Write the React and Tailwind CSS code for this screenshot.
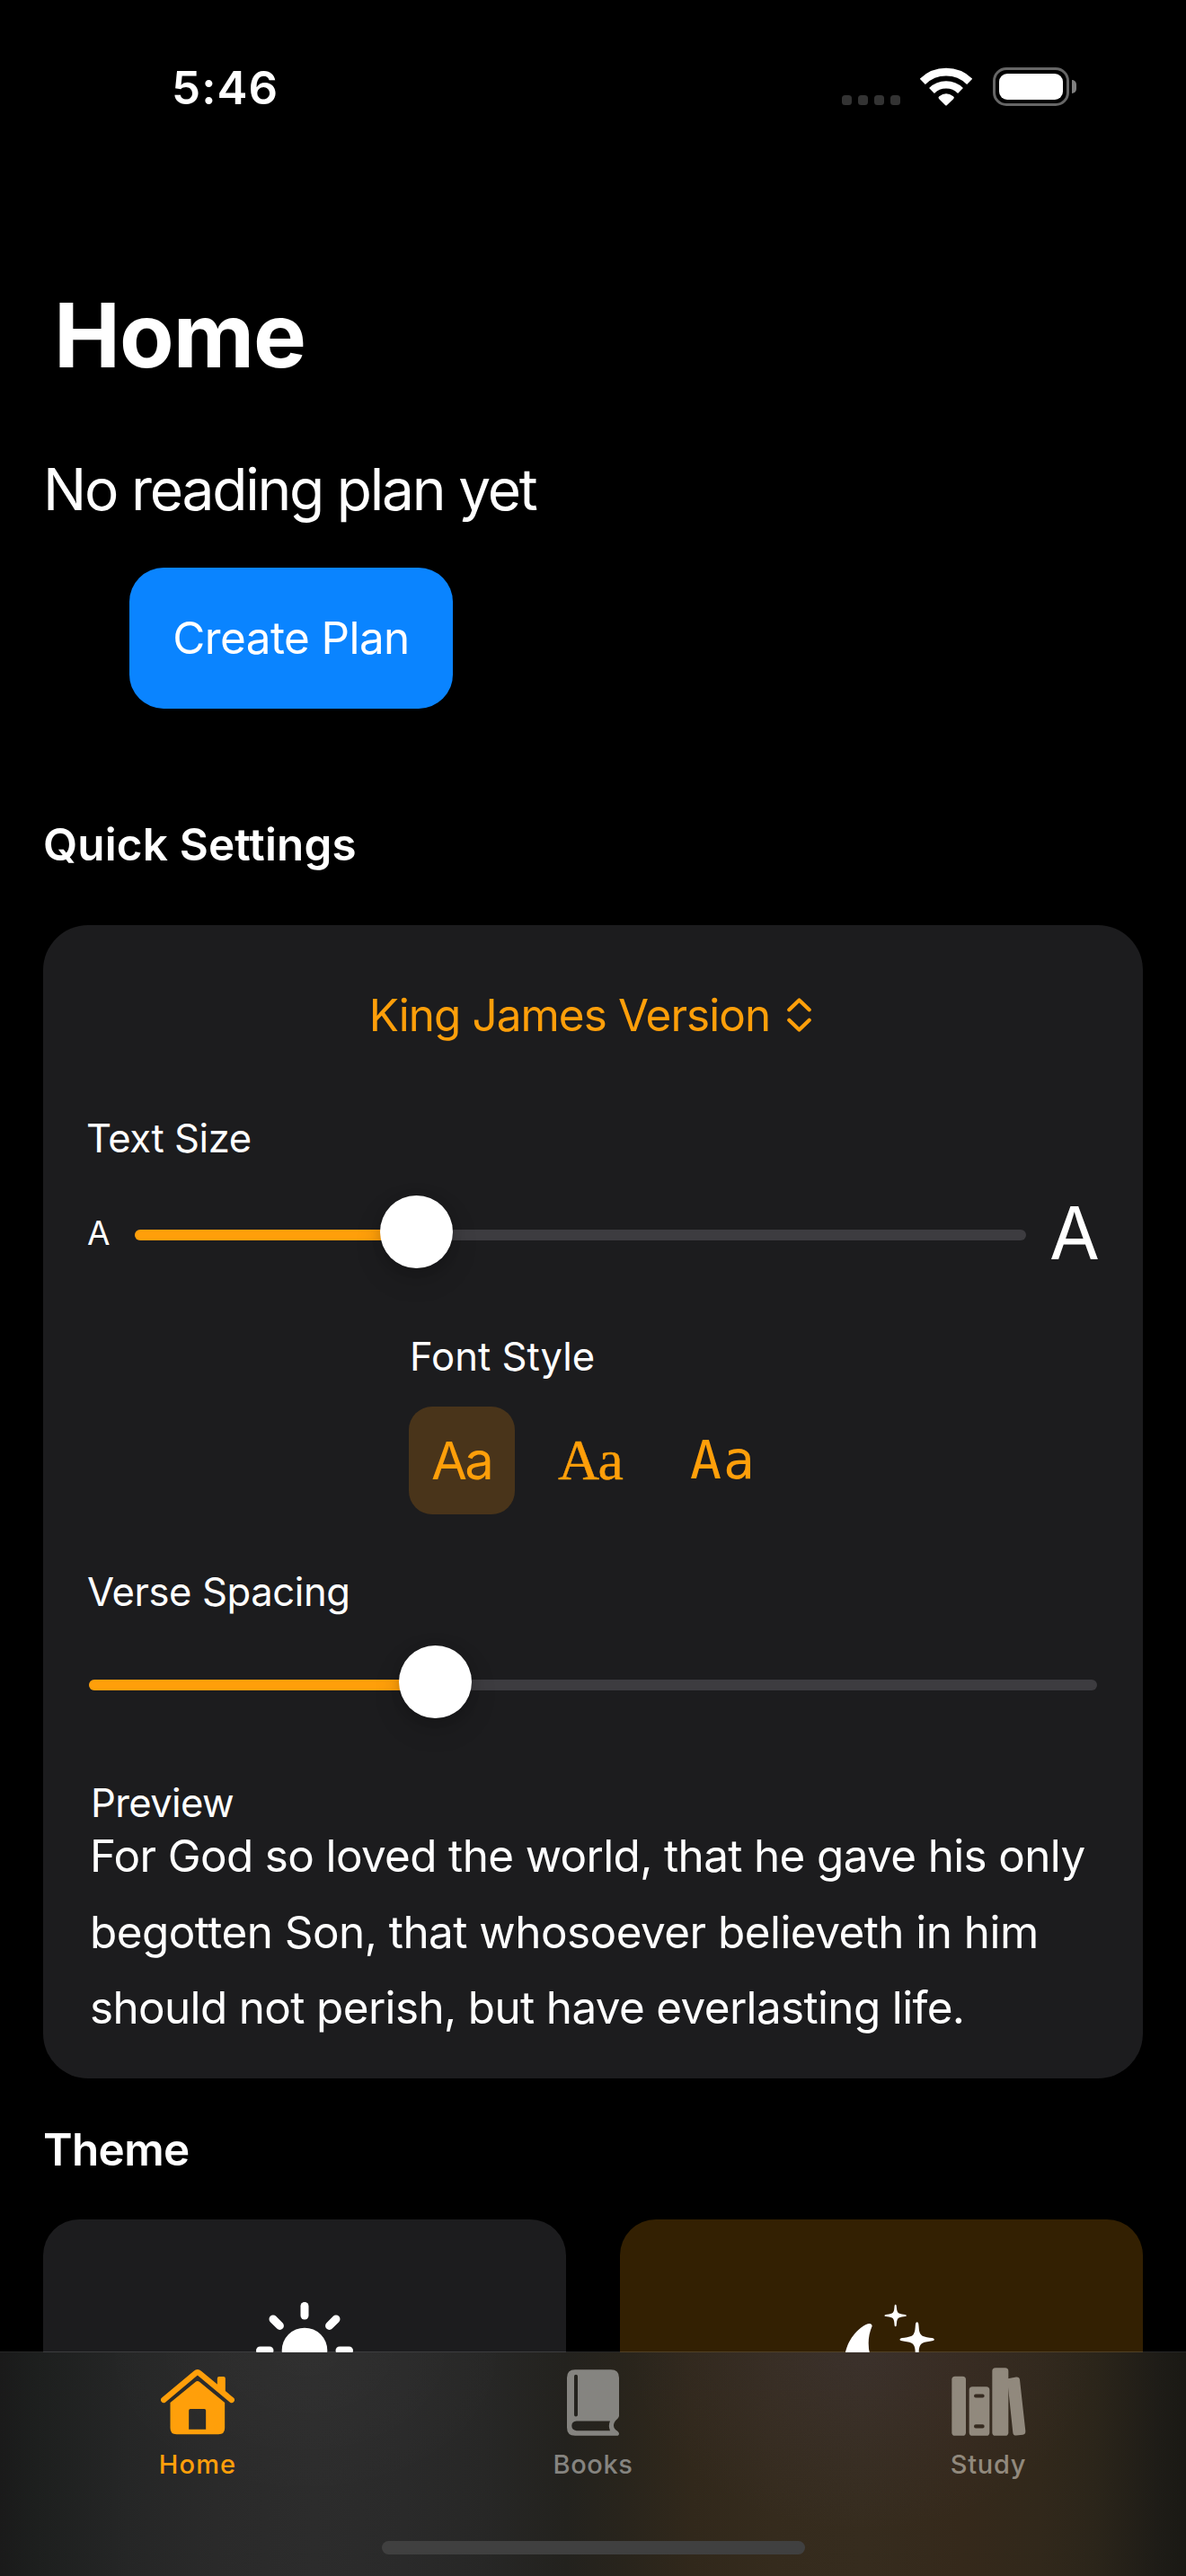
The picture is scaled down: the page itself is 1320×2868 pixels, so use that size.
const STAR =
  "M0-58C5-58 5-52 6-40C7-23 11-16 18-12C26-8 40-7 50-5C60-3 60 3 50 5C40 7 26 8 18 12C11 16 7 23 6 40C5 52 5 58 0 58C-5 58-5 52-6 40C-7 23-11 16-18 12C-26 8-40 7-50 5C-60 3-60-3-50-5C-40-7-26-8-18-12C-11-16-7-23-6-40C-5-52-5-58 0-58Z";

function WifiIcon() {
  return (
    <svg className="h-[43px] w-[58px]" viewBox="433 104 174 129" fill="none" stroke="#fff">
      <path d="M441.500 151.500A112.500 112.500 0 0 1 598.500 151.500" strokeWidth="26" />
      <path d="M472 182A68.500 68.500 0 0 1 568 182" strokeWidth="25" />
      <path d="M517 230L496 209Q492 205 497 201Q520 183 544 201Q549 205 545 209L523 230Q520 233 517 230Z" fill="#fff" stroke="none" />
    </svg>
  );
}

function BatteryIcon() {
  return (
    <div className="flex items-center gap-[3px]">
      <div className="h-[43px] w-[85px] rounded-[15px] border-[3px] border-[#666] p-1">
        <div className="h-full w-full rounded-[9px] bg-white" />
      </div>
      <div className="h-[15px] w-[5px] rounded-r-full bg-[#7f7f7f]" />
    </div>
  );
}

function StatusBar() {
  return (
    <header className="flex h-[196px] items-center justify-between pr-[122px] pl-[191px]">
      <span className="text-[51px] leading-[60px] font-semibold tracking-[1.06px]">5:46</span>
      <div className="flex items-center">
        <div className="mt-[27px] flex gap-[7px]">
          {[0, 1, 2, 3].map((dot) => (
            <span key={dot} className="size-[11px] rounded-[3.500px] bg-[#333]" />
          ))}
        </div>
        <div className="-mt-[3px] ml-[22px] flex items-center gap-[23px]">
          <WifiIcon />
          <BatteryIcon />
        </div>
      </div>
    </header>
  );
}

function Slider({ filled, thumb }) {
  return (
    <div className="relative flex h-[81px] flex-1 items-center">
      <div className="mt-[7px] h-3 w-full overflow-hidden rounded-full bg-[#3d3c40]">
        <div className="h-full bg-[#ff9f0a]" style={{ width: filled }} />
      </div>
      <div
        className="absolute top-0 size-[81px] rounded-full bg-white shadow-[0_12px_30px_rgba(0,0,0,0.16),0_2px_12px_rgba(0,0,0,0.12)]"
        style={{ left: thumb }}
      />
    </div>
  );
}

function Label({ children, className }) {
  return <div className={`text-[43.6px] leading-[54px] whitespace-nowrap ${className}`}>{children}</div>;
}

function QuickSettings() {
  return (
    <section className="mx-12 mt-[60px] h-[1284px] rounded-[50px] bg-[#1c1c1e] px-[49px] pt-[70px]">
      <button className="flex w-full items-center justify-center gap-[19px] pr-[6px] text-[#ff9f0a]">
        <span className="text-[49.4px] leading-[60px] tracking-[-0.91px]">King James Version</span>
        <svg className="h-[38px] w-[27px]" viewBox="0 0 27 38" fill="none" stroke="currentColor" strokeWidth="4.200" strokeLinecap="round" strokeLinejoin="round">
          <path d="M2.300 13.300L13.500 2.500L24.700 13.300M2.300 24.700L13.500 35.500L24.700 24.700" />
        </svg>
      </button>

      <Label className="mt-[81px] -ml-px tracking-[-0.46px]">Text Size</Label>
      <div className="mt-9 flex h-[81px] items-center">
        <span className="mt-[3px] w-[53px] text-[37px] leading-[60px]">A</span>
        <Slider filled="314px" thumb="273px" />
        <span className="mt-[3px] ml-[26px] w-[55px] text-[81px] leading-[78px]">A</span>
      </div>

      <div className="mx-auto mt-[72px] w-[410px]">
        <Label className="pl-px">Font Style</Label>
        <div className="mt-7 flex gap-6 text-[#ff9f0a]">
          <button className="h-[120px] w-[118px] rounded-[26px] bg-[#49341a] pl-[25px] text-left text-[58px] leading-[120px] tracking-[-2.800px]">
            Aa
          </button>
          <button className="h-[120px] w-[122px] pl-6 text-left font-['Liberation_Serif',serif] text-[64px] leading-[118px] tracking-[-1.600px] [-webkit-text-stroke:0.4px_#ff9f0a]">
            Aa
          </button>
          <button className="h-[120px] w-[122px] pl-[25px] text-left font-['DejaVu_Sans_Mono',monospace] text-[58px] leading-[120px] tracking-[2px]">
            Aa
          </button>
        </div>
      </div>

      <Label className="mt-[60px] tracking-[-0.41px]">Verse Spacing</Label>
      <div className="mx-0.5 mt-8 flex">
        <Slider filled="386px" thumb="345px" />
      </div>

      <Label className="mt-[68px] pl-1 tracking-[-0.63px]">Preview</Label>
      <p className="-mt-[11px] pl-[3px] text-[49.4px] leading-[84.7px] tracking-[-0.63px] whitespace-nowrap">
        For God so loved the world, that he gave his only
        <br />
        <span className="tracking-[-0.52px]">begotten Son, that whosoever believeth in him</span>
        <br />
        should not perish, but have everlasting life.
      </p>
    </section>
  );
}

function SunIcon() {
  return (
    <svg className="h-[108px] w-[108px]" viewBox="344 69 324 324" stroke="#fff" strokeWidth="27" strokeLinecap="round">
      <circle cx="506" cy="231" r="76" fill="#fff" stroke="none" />
      {[0, 45, 90, 135, 180, 225, 270, 315].map((angle) => (
        <path key={angle} d="M506 82.500V114" transform={`rotate(${angle} 506 231)`} />
      ))}
    </svg>
  );
}

function MoonStarsIcon() {
  return (
    <svg className="h-[107px] w-[102px]" viewBox="90 74 306 321" fill="#fff">
      <path d="M160 144Q180 134 182 148Q170 175 170 205Q170 225 174 240C184 300 235 345 300 330Q318 328 308 345C285 375 250 390 215 390C145 390 90 335 90 265C90 215 118 168 160 144Z" />
      <path d={STAR} transform="translate(260 113) scale(0.64)" />
      <path d={STAR} transform="translate(332 193)" />
    </svg>
  );
}

function HomeIcon() {
  return (
    <svg className="mb-px h-[73px] w-[82px]" viewBox="26.500 296 246 219" fill="currentColor">
      <path d="M36 398L142 309Q149 303 156 309L263 398" fill="none" stroke="currentColor" strokeWidth="19" strokeLinecap="round" />
      <path d="M215 354V326Q215 320 221 320H236Q242 320 242 326V377Z" />
      <path fillRule="evenodd" d="M142 338Q149 332 156 338L240 407V492Q240 513 219 513H79Q58 513 58 492V407ZM125 428Q120 428 120 433V496H177V433Q177 428 172 428Z" />
    </svg>
  );
}

function BookIcon() {
  return (
    <svg className="h-[74px] w-[58px]" viewBox="1380 294.500 174 222" fill="currentColor">
      <path
        fillRule="evenodd"
        d="M1407 295H1527Q1554 295 1554 322V449Q1554 454 1550 458Q1536 470 1536 482Q1536 493 1548 500Q1554 504 1554 509Q1554 516 1546 516H1407Q1380 516 1380 489V322Q1380 295 1407 295ZM1410 312Q1404 312 1404 318V446Q1404 452 1410 452Q1416 452 1416 446V318Q1416 312 1410 312ZM1412 467Q1396 468 1396 483Q1396 498 1412 499H1524Q1517 483 1524 467Z"
      />
    </svg>
  );
}

function ShelfIcon() {
  return (
    <svg className="h-[76px] w-[83px]" viewBox="443 288.500 249 228" fill="currentColor">
      <rect x="444" y="318" width="47" height="198" rx="11" />
      <path
        fillRule="evenodd"
        d="M513 352H559Q570 352 570 363V505Q570 516 559 516H513Q502 516 502 505V363Q502 352 513 352ZM524 377Q518 377 518 383Q518 389 524 389H547Q553 389 553 383Q553 377 547 377ZM524 478Q518 478 518 484.500Q518 491 524 491H547Q553 491 553 484.500Q553 478 547 478Z"
      />
      <rect x="579" y="289" width="54" height="227" rx="11" />
      <path d="M631 325L659 320Q670 319 671 329L690 500Q691 511 681 513L660 515Q649 516 648 505L631 345Z" />
    </svg>
  );
}

function Tab({ icon, label, className }) {
  return (
    <button className={`flex flex-1 flex-col items-center ${className}`}>
      <span className="flex h-[93px] items-end">{icon}</span>
      <span className="mt-3 text-[29px] leading-10 font-medium">{label}</span>
    </button>
  );
}

function TabBar() {
  return (
    <nav className="absolute inset-x-0 bottom-0 h-[250px] border-t border-white/15 bg-[radial-gradient(240px_170px_at_340px_0px,rgba(255,255,255,0.02),transparent),radial-gradient(260px_200px_at_960px_0px,rgba(120,110,200,0.08),transparent),linear-gradient(90deg,#1a1a1a_0,#1d1f1e_40px,#252626_140px,#2a2a2a_240px,#2c2c2c_350px,#2a2a2a_450px,#272726_540px,#23221e_630px,#28241c_690px,#31281b_770px,#352b1d_860px,#362c1e_960px,#35291b_1070px,#31281b_1160px,#2b251a_1220px,#1e1c17_1290px,#1a1914_1320px)] bg-clip-padding">
      <div className="flex">
        <Tab icon={<HomeIcon />} label="Home" className="text-[#ff9f0a] tracking-[1.1px]" />
        <Tab icon={<BookIcon />} label="Books" className="text-[#858480] tracking-[0.6px]" />
        <Tab icon={<ShelfIcon />} label="Study" className="text-[#91897d] tracking-[0.7px]" />
      </div>
      <div className="mx-auto mt-[65px] h-[15px] w-[471px] rounded-full bg-[#404040]" />
    </nav>
  );
}

export default function App() {
  return (
    <div className="relative h-[2868px] w-[1320px] overflow-hidden bg-black font-['Inter',sans-serif] text-white">
      <StatusBar />
      <main>
        <h1 className="mt-[117px] ml-[60px] text-[99px] leading-[120px] font-bold tracking-[-1px]">Home</h1>
        <p className="mt-[72px] ml-12 text-[64px] leading-[80px] tracking-[-2.220px]">No reading plan yet</p>
        <button className="mt-[47px] ml-[144px] block h-[157px] w-[360px] rounded-[38px] bg-[#0a84ff] text-[49.4px] leading-[157px] tracking-[-0.57px]">
          Create Plan
        </button>
        <h2 className="mt-[121px] ml-12 text-[49.4px] leading-[60px] font-semibold tracking-[0.16px]">Quick Settings</h2>
        <QuickSettings />
        <h2 className="mt-[49px] ml-12 text-[49.4px] leading-[60px] font-semibold tracking-[-0.63px]">Theme</h2>
        <div className="mx-12 mt-12 grid grid-cols-2 gap-[60px]">
          <div className="flex h-[420px] justify-center rounded-[40px] bg-[#1c1c1e] pt-[92px]">
            <SunIcon />
          </div>
          <div className="h-[420px] rounded-[40px] bg-[#332002] pt-[94px] pl-[250px]">
            <MoonStarsIcon />
          </div>
        </div>
      </main>
      <TabBar />
    </div>
  );
}
